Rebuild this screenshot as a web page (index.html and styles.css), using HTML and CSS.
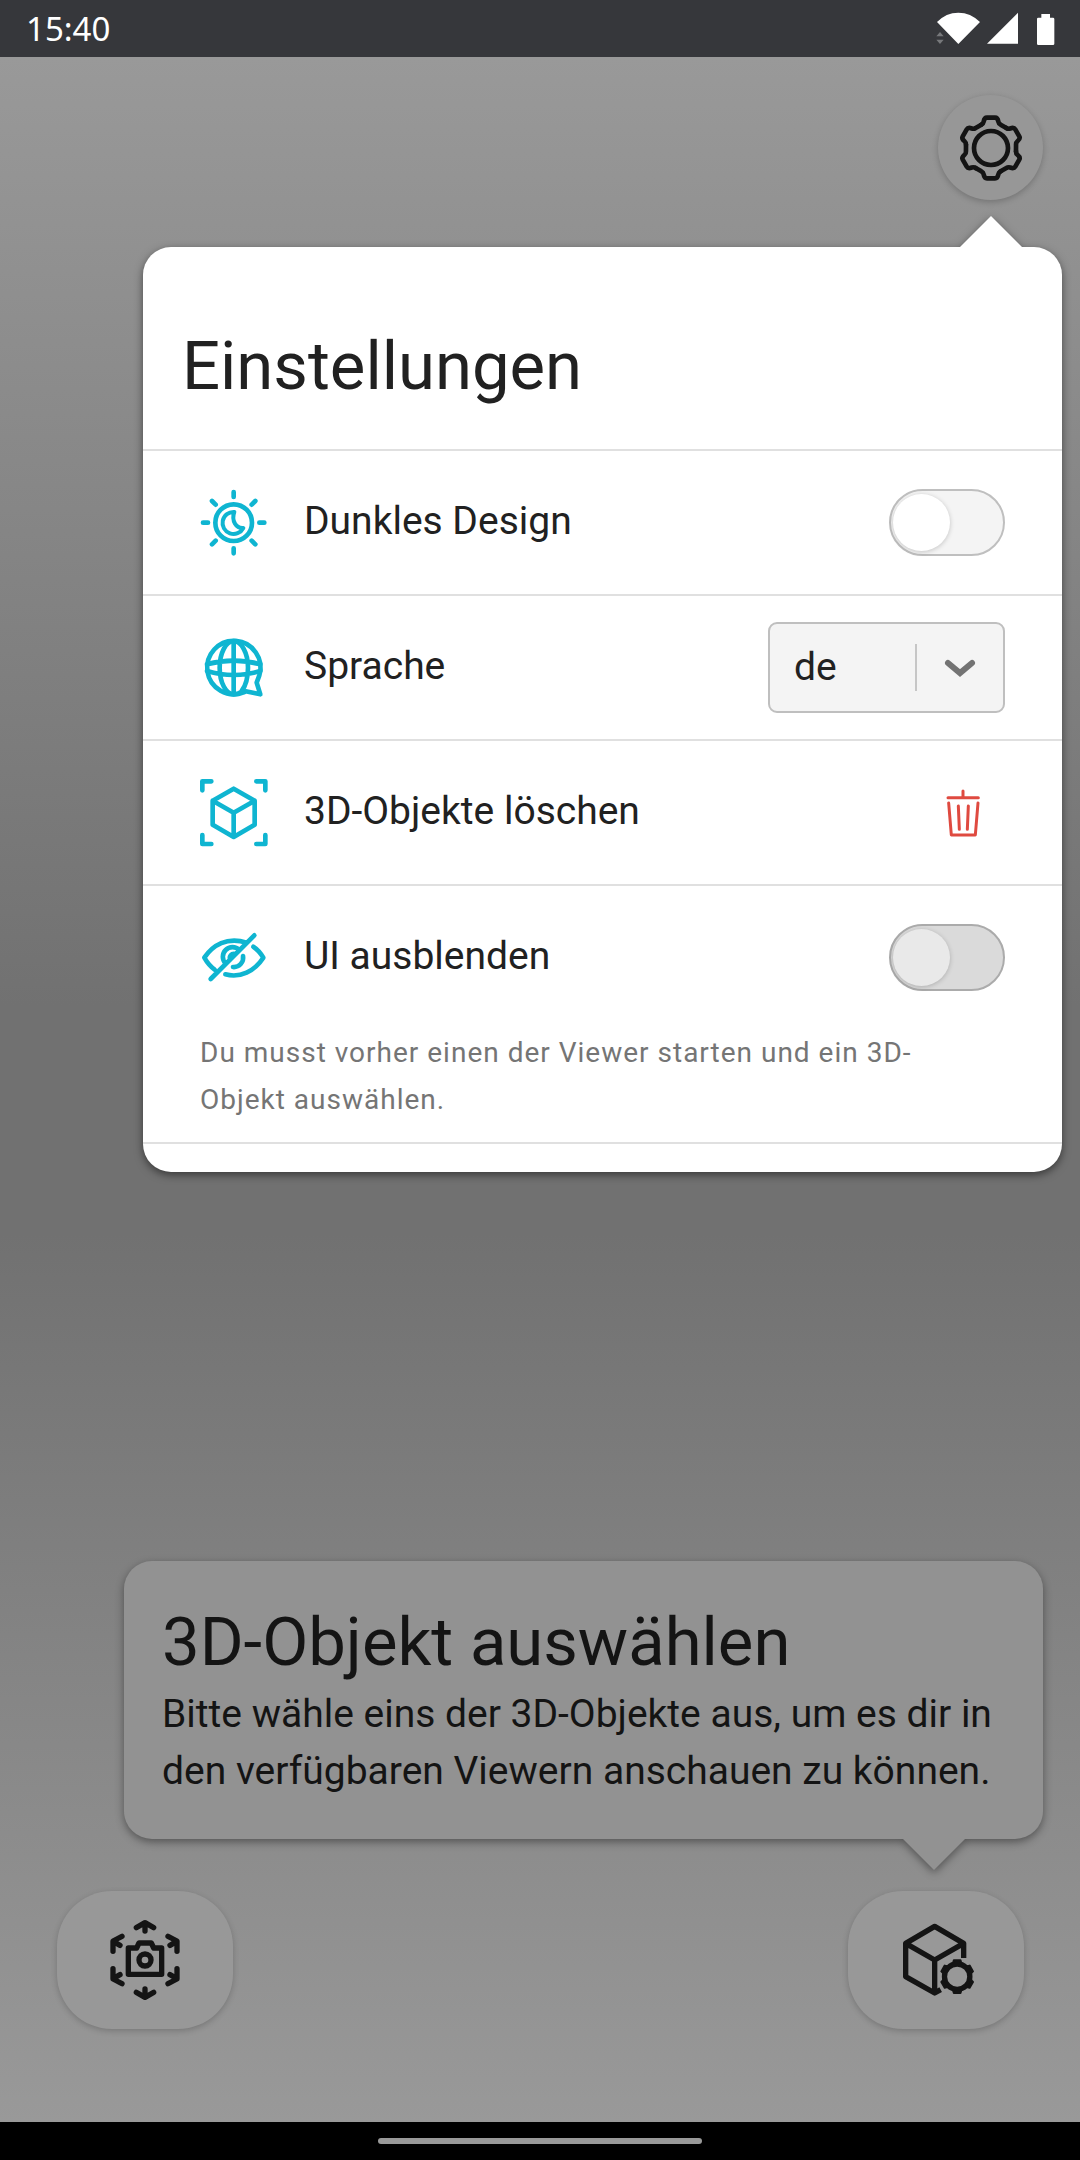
FILE: index.html
```html
<!DOCTYPE html>
<html lang="de">
<head>
<meta charset="utf-8">
<meta name="viewport" content="width=device-width, initial-scale=1">
<title>Einstellungen</title>
<link rel="stylesheet" href="styles.css">
</head>
<body>
<div class="screen">
  <header class="statusbar">
    <time class="clock">15:40</time>
    <svg class="status-icons" viewBox="108 36 357 99" aria-hidden="true">
      <path fill="#fff" d="M175 132 111 66Q138 38 175 38T240 66ZM261 131 354 38V131ZM424 42h26v11h9q4 0 4 4v74q0 4-4 4h-44q-4 0-4-4V57q0-4 4-4h9Z"/>
      <path fill="#77787b" d="M109 109 120 96 131 109ZM109 119 120 132 131 119Z"/>
    </svg>
  </header>

  <main class="viewer">
    <button class="round-button" type="button" aria-label="Einstellungen">
      <svg class="gear-icon" viewBox="-99 -99 198 198" fill="none" stroke="currentColor" stroke-width="14" stroke-linecap="round" stroke-linejoin="round">
        <defs><path id="tooth" d="M-29-70Q-23-73-22-79-20-91-12-91H12Q20-91 22-79 23-73 29-70L46-60"/></defs>
        <circle r="51"/>
        <use href="#tooth"/>
        <use href="#tooth" transform="rotate(60)"/>
        <use href="#tooth" transform="rotate(120)"/>
        <use href="#tooth" transform="rotate(180)"/>
        <use href="#tooth" transform="rotate(240)"/>
        <use href="#tooth" transform="rotate(300)"/>
      </svg>
    </button>

    <section class="settings" aria-labelledby="settings-title">
      <h1 class="title settings-title" id="settings-title">Einstellungen</h1>
      <ul class="rows">
        <li class="row">
          <div class="row-main">
            <svg class="row-icon" viewBox="-101 -101 204 204">
              <circle r="55"/>
              <path d="M0-92V-77M0 92V77M-92 0H-77M92 0H77M-65-65-54-54M65-65 54-54M-65 65-54 54M65 65 54 54"/>
              <path stroke-width="12" d="M2-32A33 33 0 1 0 29 16C8 18-8-5 2-32Z"/>
            </svg>
            <label class="label" for="dark">Dunkles Design</label>
            <input class="toggle" type="checkbox" id="dark">
          </div>
        </li>
        <li class="row">
          <div class="row-main">
            <svg class="row-icon" viewBox="59 521 204 204">
              <path d="M237 645 229 667 240 702 196 693 190 696A80 80 0 1 1 237 645M160 542V702"/>
              <path d="M184 694C173 702 160 702 160 702 137 702 118 666 118 622S137 542 160 542 203 578 203 622C203 650 196 676 184 692M80 612Q160 590 240 612M80 632Q160 656 240 632"/>
            </svg>
            <label class="label" for="language">Sprache</label>
            <div class="select-box">
              <select class="select" id="language">
                <option>de</option>
                <option>en</option>
              </select>
              <svg class="chevron" viewBox="0 0 32 20" aria-hidden="true"><path d="M4 4 16 14 28 4"/></svg>
            </div>
          </div>
        </li>
        <li class="row">
          <div class="row-main">
            <svg class="row-icon" viewBox="59 86 204 204">
              <path d="M66 120V93H93M228 93H255V120M255 254V281H228M93 281H66V254M160 115 223 151V223L160 260 97 223V151ZM97 151 160 187 223 151M160 187V260"/>
            </svg>
            <span class="label">3D-Objekte löschen</span>
            <button class="delete" type="button" aria-label="3D-Objekte löschen">
              <svg class="trash-icon" viewBox="613 116 108 144">
                <path d="M622 142H713M667 122V140M624 158 632 254H704L712 158M653 167 656 237M683 167 680 237"/>
              </svg>
            </button>
          </div>
        </li>
        <li class="row">
          <div class="row-main">
            <svg class="row-icon" viewBox="59 521 204 204">
              <path d="M91 686 222 555M103 658Q85 645 72 622C97 585 140 558 199 577M219 589Q236 600 249 622C222 663 180 684 135 672M136 640A28 28 0 0 1 177 599M188 617A28 28 0 0 1 158 650M150 628A12 12 0 0 1 164 611"/>
            </svg>
            <label class="label" for="hide-ui">UI ausblenden</label>
            <input class="toggle" type="checkbox" id="hide-ui" aria-describedby="hide-ui-note" disabled>
          </div>
          <p class="note" id="hide-ui-note">Du musst vorher einen der Viewer starten und ein 3D-Objekt auswählen.</p>
        </li>
      </ul>
    </section>

    <section class="hint">
      <h2 class="title">3D-Objekt auswählen</h2>
      <p class="hint-text">Bitte wähle eins der 3D-Objekte aus, um es dir in den verfügbaren Viewern anschauen zu können.</p>
    </section>

    <nav class="actions">
      <button class="action" type="button" aria-label="Kamera">
        <svg class="action-icon" viewBox="-120 -120 240 240" fill="none" stroke="currentColor" stroke-width="16" stroke-linecap="round" stroke-linejoin="round">
          <path d="M-50-36H-25L-18-51H19L26-36H50V43H-50Z"/>
          <circle r="18"/>
          <path d="M-26-97 0-112 26-97M0-110V-87M-26 97 0 112 26 97M0 110V87M-96-26V-57L-69-71M-94-55-75-44M96-26V-57L69-71M94-55 75-44M-96 26V57L-69 71M-94 55-75 44M96 26V57L69 71M94 55 75 44"/>
        </svg>
      </button>
      <button class="action" type="button" aria-label="3D-Objekt auswählen">
        <svg class="action-icon" viewBox="228 360 240 240" fill="none" stroke="currentColor" stroke-width="16" stroke-linejoin="round">
          <path d="M431 474V430L344 379 257 430V530L344 579 362 569M257 430 344 480 431 430M344 480V579"/>
          <g transform="translate(411.5 530)">
            <circle r="51" stroke="none" class="cutout"/>
            <circle r="38"/>
            <path id="cog" fill="currentColor" stroke-width="6" d="M-13-38-10-49H10L13-38Z"/>
            <use href="#cog" transform="rotate(60)"/>
            <use href="#cog" transform="rotate(120)"/>
            <use href="#cog" transform="rotate(180)"/>
            <use href="#cog" transform="rotate(240)"/>
            <use href="#cog" transform="rotate(300)"/>
          </g>
        </svg>
      </button>
    </nav>
  </main>

  <footer class="navbar"><div class="home-pill"></div></footer>
</div>
</body>
</html>
```
FILE: styles.css
```css
* {
  box-sizing: border-box;
}

body {
  margin: 0;
  font-family: Roboto, "Liberation Sans", sans-serif;
  font-size: 39px;
  color: #212121;
}

h1, h2, p, ul {
  margin: 0;
  padding: 0;
}

button {
  padding: 0;
  border: 0;
  color: #141414;
}

svg {
  display: block;
}

.screen {
  display: flex;
  flex-direction: column;
  min-height: 100vh;
}

.statusbar {
  display: flex;
  align-items: center;
  justify-content: space-between;
  height: 57px;
  padding: 0 25px 0 26px;
  background: #36373b;
  color: #fff;
}

.clock {
  font-family: "Noto Sans", sans-serif;
  font-size: 33px;
  line-height: 56px;
}

.status-icons {
  width: 119px;
  height: 33px;
}

.viewer {
  flex: 1;
  display: flex;
  flex-direction: column;
  padding: 38px 0 93px;
  background: linear-gradient(#999, #717171 46%, #717171 57%, #999);
}

.round-button {
  display: grid;
  place-items: center;
  align-self: flex-end;
  width: 105px;
  height: 105px;
  margin-right: 37px;
  border-radius: 50%;
  background: #979797;
  box-shadow: 0 2px 6px rgba(0, 0, 0, 0.22);
}

.gear-icon {
  width: 66px;
  height: 66px;
}

.settings {
  position: relative;
  margin: 47px 18px 0 143px;
  padding-bottom: 28px;
  border-radius: 28px;
  background: #fff;
  filter: drop-shadow(0 3px 4px rgba(0, 0, 0, 0.5));
}

.settings::before,
.hint::after {
  content: "";
  position: absolute;
  width: 62px;
  height: 31px;
  background: inherit;
}

.settings::before {
  right: 40px;
  bottom: 100%;
  clip-path: polygon(0 100%, 50% 0, 100% 100%);
}

.hint::after {
  right: 78px;
  top: 100%;
  clip-path: polygon(0 0, 50% 100%, 100% 0);
}

.title {
  font-size: 67px;
  font-weight: 400;
  line-height: 84px;
}

.settings-title {
  padding: 77px 39px 41px;
}

.rows {
  list-style: none;
  border-top: 2px solid #e0e0e0;
}

.row {
  border-bottom: 2px solid #e0e0e0;
}

.row-main {
  display: flex;
  align-items: center;
  height: 143px;
  padding: 0 57px;
}

.row-icon {
  width: 68px;
  height: 68px;
  fill: none;
  stroke: #0fb5d1;
  stroke-width: 14;
  stroke-linecap: round;
  stroke-linejoin: round;
}

.label {
  flex: 1;
  padding: 0 0 3px 36px;
  line-height: 56px;
}

.toggle {
  appearance: none;
  width: 116px;
  height: 67px;
  margin: 0;
  padding: 3px 2px;
  border: 2px solid #bfbfbf;
  border-radius: 34px;
  background: #f4f4f4;
}

.toggle::before {
  content: "";
  display: block;
  width: 57px;
  height: 57px;
  border-radius: 50%;
  background: #fff;
  box-shadow: 0 1px 5px rgba(0, 0, 0, 0.2);
}

.toggle:disabled {
  border-color: #ababab;
  background: #dadada;
}

.toggle:disabled::before {
  background: #e9e9e9;
}

.select-box {
  position: relative;
  width: 237px;
}

.select {
  appearance: none;
  display: block;
  width: 100%;
  height: 91px;
  padding: 0 92px 2px 24px;
  border: 2px solid #bfbfbf;
  border-radius: 9px;
  background: linear-gradient(#c6c6c6, #c6c6c6) right 86px center / 2px 47px no-repeat #f4f4f4;
  color: inherit;
  font: inherit;
}

.chevron {
  position: absolute;
  top: 37px;
  right: 29px;
  width: 32px;
  height: 20px;
  fill: none;
  stroke: #737373;
  stroke-width: 6;
  stroke-linecap: round;
  pointer-events: none;
}

.delete {
  display: grid;
  place-items: center;
  width: 85px;
  height: 85px;
  background: none;
}

.trash-icon {
  width: 36px;
  height: 48px;
  fill: none;
  stroke: #df4a40;
  stroke-width: 9;
  stroke-linecap: round;
  stroke-linejoin: round;
}

.note {
  padding: 0 96px 19px 57px;
  color: #757575;
  font-size: 28px;
  line-height: 47px;
  letter-spacing: 1px;
}

.hint {
  position: relative;
  margin: auto 37px 52px 124px;
  padding: 39px 38px;
  border-radius: 28px;
  background: #929292;
  color: #141414;
  filter: drop-shadow(0 3px 4px rgba(0, 0, 0, 0.4));
}

.hint-text {
  margin-top: 2px;
  line-height: 57px;
}

.actions {
  display: flex;
  justify-content: space-between;
  padding: 0 56px 0 57px;
}

.action {
  display: grid;
  place-items: center;
  width: 176px;
  height: 138px;
  border-radius: 55px;
  background: #989898;
  box-shadow: 0 2px 6px rgba(0, 0, 0, 0.2);
}

.action-icon {
  width: 80px;
  height: 80px;
}

.cutout {
  fill: #989898;
}

.navbar {
  display: grid;
  place-items: center;
  height: 38px;
  background: #000;
}

.home-pill {
  width: 30%;
  height: 6px;
  border-radius: 3px;
  background: #999;
}
```
